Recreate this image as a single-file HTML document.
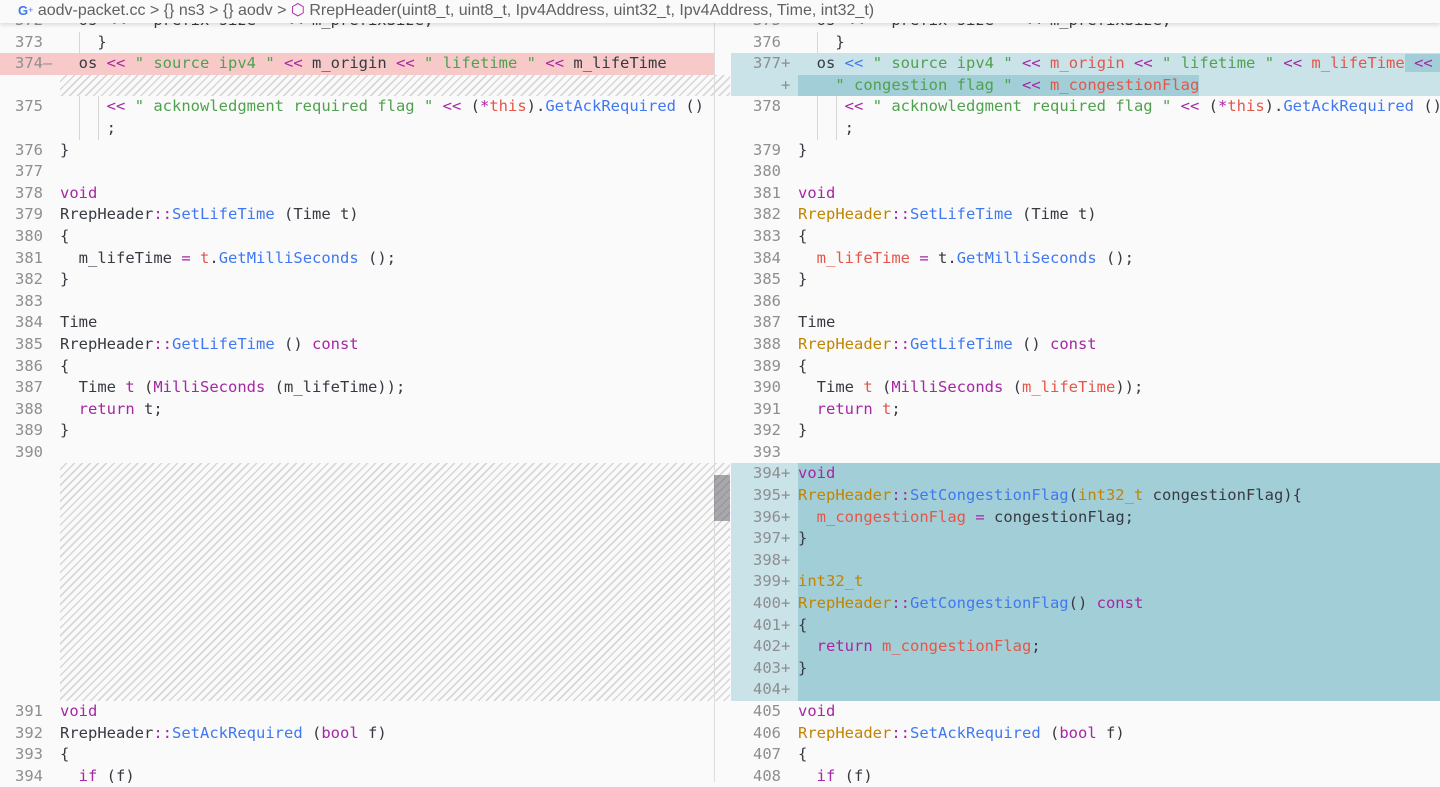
<!DOCTYPE html>
<html><head><meta charset="utf-8"><style>
*{margin:0;padding:0;box-sizing:border-box}
body{width:1440px;height:782px;overflow:hidden;background:#fafafa;font-family:"DejaVu Sans Mono","Liberation Mono",monospace;font-size:15.5px;color:#383a42;position:relative}
.bc{position:absolute;left:0;top:0;width:1440px;height:23px;background:#fafafa;z-index:5;font-family:"Liberation Sans",sans-serif;font-size:16px;color:#616161;line-height:21px;padding-left:18px;white-space:nowrap;box-shadow:0 2px 4px rgba(0,0,0,.12)}
.pane{position:absolute;top:10px;overflow:hidden}
.L{left:0;width:730px}
.R{left:731px;width:709px}
.r{height:21.6px;line-height:21.6px;white-space:pre;position:relative}
.n{position:absolute;left:0;top:0;text-align:right;color:#8e8e90}
.L .n{width:43px}
.R .n{width:50px}
.m{position:absolute;top:0;color:#8e8e90}
.L .m{left:43px}
.R .m{left:50px}
.c{position:absolute;top:0}
.L .c{left:60px}
.R .c{left:67px}
.del{background:#f8c9c9;width:714px}
.add{background:#c9e3e8}
.add2{background:#c9e3e8}
.add2 .c{background:#a2cfd7;right:0;height:21.6px}
.hatch{background:repeating-linear-gradient(135deg,#fafafa 0,#fafafa 4px,#d7d7d7 4px,#d7d7d7 5.6px)}
.L .hatch{margin-left:60px}
.k{color:#a626a4}.s{color:#50a14f}.f{color:#4078f2}.v{color:#e45649}.t{color:#c18401}.o{color:#a626a4}.b{color:#4078f2}
.g{position:absolute;top:0;width:1px;height:21.6px;background:#d6d6d6}
</style></head><body>
<div class="bc"><span style="color:#4078f2;font-weight:bold;font-size:13px">G</span><span style="font-size:9px;color:#4078f2;vertical-align:top">+</span> aodv-packet.cc <span>&gt;</span> {} ns3 <span>&gt;</span> {} aodv <span>&gt;</span> <span style="color:#a626a4">⬡</span> RrepHeader(uint8_t, uint8_t, Ipv4Address, uint32_t, Ipv4Address, Time, int32_t)</div>

<div class="pane L">
<div class="r"><span class="n">372</span><span class="c">  os << " prefix size " << m_prefixSize;</span></div>
<div class="r"><span class="n">373</span><span class="g" style="left:79px"></span><span class="c">    }</span></div>
<div class="r del"><span class="n">374</span><span class="m">—</span><span class="c">  os <span class="o">&lt;&lt;</span> <span class="s">" source ipv4 "</span> <span class="o">&lt;&lt;</span> m_origin <span class="o">&lt;&lt;</span> <span class="s">" lifetime "</span> <span class="o">&lt;&lt;</span> m_lifeTime</span></div>
<div class="r"><div class="hatch" style="height:21.6px"></div></div>
<div class="r"><span class="n">375</span><span class="g" style="left:79px"></span><span class="g" style="left:98px"></span><span class="c">     <span class="o">&lt;&lt;</span> <span class="s">" acknowledgment required flag "</span> <span class="o">&lt;&lt;</span> (<span class="o">*</span><span class="v">this</span>).<span class="f">GetAckRequired</span> ()</span></div>
<div class="r"><span class="g" style="left:79px"></span><span class="g" style="left:98px"></span><span class="c">     ;</span></div>
<div class="r"><span class="n">376</span><span class="c">}</span></div>
<div class="r"><span class="n">377</span></div>
<div class="r"><span class="n">378</span><span class="c"><span class="k">void</span></span></div>
<div class="r"><span class="n">379</span><span class="c">RrepHeader<span class="o">::</span><span class="f">SetLifeTime</span> (Time t)</span></div>
<div class="r"><span class="n">380</span><span class="c">{</span></div>
<div class="r"><span class="n">381</span><span class="c">  m_lifeTime <span class="o">=</span> <span class="v">t</span>.<span class="f">GetMilliSeconds</span> ();</span></div>
<div class="r"><span class="n">382</span><span class="c">}</span></div>
<div class="r"><span class="n">383</span></div>
<div class="r"><span class="n">384</span><span class="c">Time</span></div>
<div class="r"><span class="n">385</span><span class="c">RrepHeader<span class="o">::</span><span class="f">GetLifeTime</span> () <span class="k">const</span></span></div>
<div class="r"><span class="n">386</span><span class="c">{</span></div>
<div class="r"><span class="n">387</span><span class="c">  Time <span class="k">t</span> (<span class="k">MilliSeconds</span> (m_lifeTime));</span></div>
<div class="r"><span class="n">388</span><span class="c">  <span class="k">return</span> t;</span></div>
<div class="r"><span class="n">389</span><span class="c">}</span></div>
<div class="r"><span class="n">390</span></div>
<div class="hatch" style="height:237.6px"></div>
<div class="r"><span class="n">391</span><span class="c"><span class="k">void</span></span></div>
<div class="r"><span class="n">392</span><span class="c">RrepHeader<span class="o">::</span><span class="f">SetAckRequired</span> (<span class="k">bool</span> f)</span></div>
<div class="r"><span class="n">393</span><span class="c">{</span></div>
<div class="r"><span class="n">394</span><span class="c">  <span class="k">if</span> (f)</span></div>
</div>
<div style="position:absolute;left:714px;top:23px;width:1px;height:759px;background:#dcdcdc"></div>
<div style="position:absolute;left:714px;top:475px;width:16px;height:46px;background:rgba(100,100,110,.55)"></div>

<div class="pane R">
<div class="r"><span class="n">375</span><span class="c">  os << " prefix size " << m_prefixSize;</span></div>
<div class="r"><span class="n">376</span><span class="g" style="left:86px"></span><span class="c">    }</span></div>
<div class="r add"><span class="n">377</span><span class="m">+</span><span class="c">  os <span class="b">&lt;&lt;</span> <span class="s">" source ipv4 "</span> <span class="o">&lt;&lt;</span> <span class="v">m_origin</span> <span class="o">&lt;&lt;</span> <span class="s">" lifetime "</span> <span class="o">&lt;&lt;</span> <span class="v">m_lifeTime</span><span style="background:#a2cfd7"> <span class="o">&lt;&lt;</span>   </span></span></div>
<div class="r add"><span class="m">+</span><span class="c" style="background:#a2cfd7">    <span class="s">" congestion flag "</span> <span class="o">&lt;&lt;</span> <span class="v">m_congestionFlag</span></span></div>
<div class="r"><span class="n">378</span><span class="g" style="left:86px"></span><span class="g" style="left:105px"></span><span class="c">     <span class="o">&lt;&lt;</span> <span class="s">" acknowledgment required flag "</span> <span class="o">&lt;&lt;</span> (<span class="o">*</span><span class="v">this</span>).<span class="f">GetAckRequired</span> ()</span></div>
<div class="r"><span class="g" style="left:86px"></span><span class="g" style="left:105px"></span><span class="c">     ;</span></div>
<div class="r"><span class="n">379</span><span class="c">}</span></div>
<div class="r"><span class="n">380</span></div>
<div class="r"><span class="n">381</span><span class="c"><span class="k">void</span></span></div>
<div class="r"><span class="n">382</span><span class="c"><span class="t">RrepHeader</span><span class="o">::</span><span class="f">SetLifeTime</span> (Time t)</span></div>
<div class="r"><span class="n">383</span><span class="c">{</span></div>
<div class="r"><span class="n">384</span><span class="c">  <span class="v">m_lifeTime</span> <span class="o">=</span> t.<span class="f">GetMilliSeconds</span> ();</span></div>
<div class="r"><span class="n">385</span><span class="c">}</span></div>
<div class="r"><span class="n">386</span></div>
<div class="r"><span class="n">387</span><span class="c">Time</span></div>
<div class="r"><span class="n">388</span><span class="c"><span class="t">RrepHeader</span><span class="o">::</span><span class="f">GetLifeTime</span> () <span class="k">const</span></span></div>
<div class="r"><span class="n">389</span><span class="c">{</span></div>
<div class="r"><span class="n">390</span><span class="c">  Time <span class="v">t</span> (<span class="k">MilliSeconds</span> (<span class="v">m_lifeTime</span>));</span></div>
<div class="r"><span class="n">391</span><span class="c">  <span class="k">return</span> <span class="v">t</span>;</span></div>
<div class="r"><span class="n">392</span><span class="c">}</span></div>
<div class="r"><span class="n">393</span></div>
<div class="r add2"><span class="n">394</span><span class="m">+</span><span class="c"><span class="k">void</span></span></div>
<div class="r add2"><span class="n">395</span><span class="m">+</span><span class="c"><span class="t">RrepHeader</span><span class="o">::</span><span class="f">SetCongestionFlag</span>(<span class="t">int32_t</span> congestionFlag){</span></div>
<div class="r add2"><span class="n">396</span><span class="m">+</span><span class="c">  <span class="v">m_congestionFlag</span> <span class="o">=</span> congestionFlag;</span></div>
<div class="r add2"><span class="n">397</span><span class="m">+</span><span class="c">}</span></div>
<div class="r add2"><span class="n">398</span><span class="m">+</span><span class="c"> </span></div>
<div class="r add2"><span class="n">399</span><span class="m">+</span><span class="c"><span class="t">int32_t</span></span></div>
<div class="r add2"><span class="n">400</span><span class="m">+</span><span class="c"><span class="t">RrepHeader</span><span class="o">::</span><span class="f">GetCongestionFlag</span>() <span class="k">const</span></span></div>
<div class="r add2"><span class="n">401</span><span class="m">+</span><span class="c">{</span></div>
<div class="r add2"><span class="n">402</span><span class="m">+</span><span class="c">  <span class="k">return</span> <span class="v">m_congestionFlag</span>;</span></div>
<div class="r add2"><span class="n">403</span><span class="m">+</span><span class="c">}</span></div>
<div class="r add2"><span class="n">404</span><span class="m">+</span><span class="c"> </span></div>
<div class="r"><span class="n">405</span><span class="c"><span class="k">void</span></span></div>
<div class="r"><span class="n">406</span><span class="c"><span class="t">RrepHeader</span><span class="o">::</span><span class="f">SetAckRequired</span> (<span class="k">bool</span> f)</span></div>
<div class="r"><span class="n">407</span><span class="c">{</span></div>
<div class="r"><span class="n">408</span><span class="c">  <span class="k">if</span> (f)</span></div>
</div>
</body></html>
